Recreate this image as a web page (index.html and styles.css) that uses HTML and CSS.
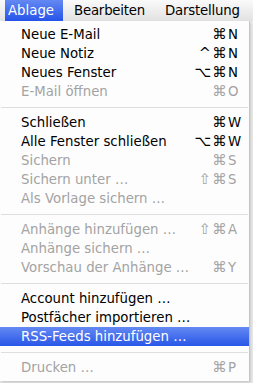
FILE: index.html
```html
<!DOCTYPE html>
<html lang="de">
<head>
    <meta charset="UTF-8">
    <title>Ablage</title>
    <link rel="stylesheet" href="styles.css">
</head>
<body>
    <div class="menubar">
        <span class="title active">Ablage</span>
        <span class="title">Bearbeiten</span>
        <span class="title">Darstellung</span>
    </div>

    <div class="menu">
        <div class="item"><span class="label">Neue E-Mail</span><span class="keys"><span class="mod"></span><span class="cmd">⌘</span><span class="key">N</span></span></div>
        <div class="item"><span class="label">Neue Notiz</span><span class="keys"><span class="mod">^</span><span class="cmd">⌘</span><span class="key">N</span></span></div>
        <div class="item"><span class="label">Neues Fenster</span><span class="keys"><span class="mod">⌥</span><span class="cmd">⌘</span><span class="key">N</span></span></div>
        <div class="item disabled"><span class="label">E-Mail öffnen</span><span class="keys"><span class="mod"></span><span class="cmd">⌘</span><span class="key">O</span></span></div>

        <div class="separator"></div>

        <div class="item"><span class="label">Schließen</span><span class="keys"><span class="mod"></span><span class="cmd">⌘</span><span class="key">W</span></span></div>
        <div class="item"><span class="label">Alle Fenster schließen</span><span class="keys"><span class="mod">⌥</span><span class="cmd">⌘</span><span class="key">W</span></span></div>
        <div class="item disabled"><span class="label">Sichern</span><span class="keys"><span class="mod"></span><span class="cmd">⌘</span><span class="key">S</span></span></div>
        <div class="item disabled"><span class="label">Sichern unter …</span><span class="keys"><span class="mod">⇧</span><span class="cmd">⌘</span><span class="key">S</span></span></div>
        <div class="item disabled"><span class="label">Als Vorlage sichern …</span></div>

        <div class="separator"></div>

        <div class="item disabled"><span class="label">Anhänge hinzufügen …</span><span class="keys"><span class="mod">⇧</span><span class="cmd">⌘</span><span class="key">A</span></span></div>
        <div class="item disabled"><span class="label">Anhänge sichern …</span></div>
        <div class="item disabled"><span class="label">Vorschau der Anhänge …</span><span class="keys"><span class="mod"></span><span class="cmd">⌘</span><span class="key">Y</span></span></div>

        <div class="separator"></div>

        <div class="item"><span class="label">Account hinzufügen …</span></div>
        <div class="item"><span class="label">Postfächer importieren …</span></div>
        <div class="item selected"><span class="label">RSS-Feeds hinzufügen …</span></div>

        <div class="separator"></div>

        <div class="item disabled"><span class="label">Drucken …</span><span class="keys"><span class="mod"></span><span class="cmd">⌘</span><span class="key">P</span></span></div>
    </div>
</body>
</html>
```

FILE: styles.css
```css
* {
    margin: 0;
    padding: 0;
    box-sizing: border-box;
}

body {
    font-family: "DejaVu Sans", "Liberation Sans", sans-serif;
    font-size: 13.3px;
    color: #000;
    background: #ececec;
    width: 253px;
    height: 383px;
    overflow: hidden;
}

/* top bar */
.menubar {
    display: flex;
    gap: 8px;
    height: 21px;
    padding-left: 5px;
    background: linear-gradient(#fafafa, #e2e2e2);
    line-height: 21px;
    white-space: nowrap;
}

.title {
    padding: 0 9px 0 3px;
}

.title + .title {
    letter-spacing: -0.2px;
}

.title.active {
    color: #fff;
    background: linear-gradient(#6489f2, #2553e8);
}

/* drop-down */
.menu {
    width: 250px;
    padding: 4px 0;
    background: #fdfdfd;
    border-right: 1px solid #c4c4c4;
    box-shadow: 1px 2px 3px rgba(0, 0, 0, 0.15);
}

.item {
    display: flex;
    align-items: center;
    height: 19px;
    line-height: 19px;
    padding: 0 12px 0 21px;
    white-space: nowrap;
}

.item .label {
    flex: 1;
}

.keys {
    display: flex;
    align-items: center;
}

.mod {
    text-align: right;
    padding-right: 1px;
    font-size: 14.5px;
}

.cmd {
    width: 15px;
    text-align: center;
    font-size: 14.5px;
}

.key {
    width: 10px;
    padding-left: 1px;
    text-align: left;
}

.disabled {
    color: #a3a3a3;
}

.selected {
    color: #fff;
    background: linear-gradient(#6489f2, #2856e8);
}

.separator {
    height: 12px;
    display: flex;
    align-items: center;
    padding: 0 1px;
}

.separator::after {
    content: "";
    flex: 1;
    height: 1px;
    background: #dedede;
}
```
